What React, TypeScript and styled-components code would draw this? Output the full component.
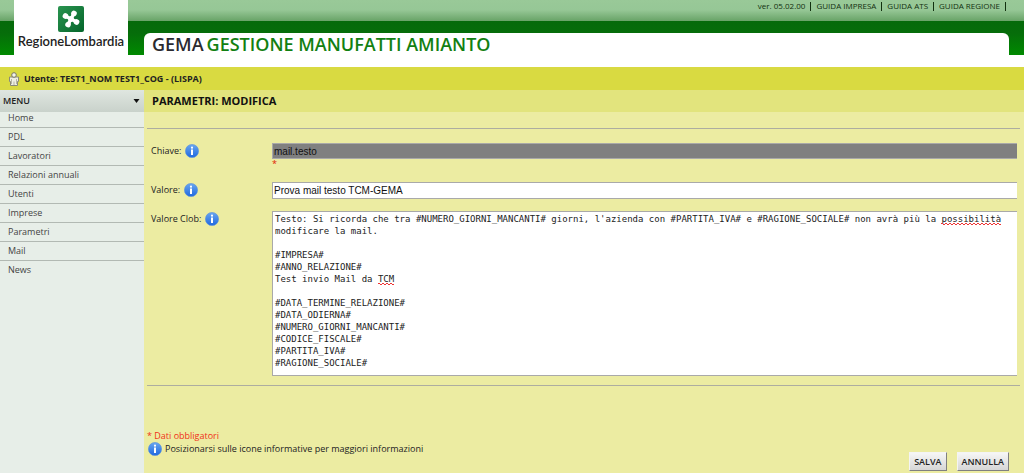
import React from 'react';
import styled, { createGlobalStyle } from 'styled-components';

const GlobalStyle = createGlobalStyle`
  *, *::before, *::after { box-sizing: border-box; }
  html, body, #root { min-height: 100vh; }
  body {
    margin: 0;
    background: #ececa2;
    color: #222;
    font: 9px/12px "Trebuchet MS", "Open Sans", sans-serif;
  }
`;

const Page = styled.div`
  min-height: 100vh;
  display: flex;
  flex-direction: column;
`;

const Header = styled.header`
  display: grid;
  grid-template-columns: 144px 1fr;
  grid-template-rows: 21px 12px 22px 12px;
  background:
    linear-gradient(#99c998 0, #96c796 10px, #68a367 21px, transparent 21px) top / 100% 21px no-repeat,
    linear-gradient(#056a0a, #066d0a 12px, #008a00) 0 21px / 100% 34px no-repeat,
    #fff;
`;

const Logo = styled.a`
  grid-row: 1 / 4;
  grid-column: 1;
  width: 114px;
  margin-left: 14px;
  padding-top: 6px;
  background: #fff;
  color: #222;
  display: flex;
  flex-direction: column;
  align-items: center;
  gap: 2px;
  text-decoration: none;
  font: 600 13px/14px Lato, sans-serif;
`;

const TopNav = styled.nav`
  grid-row: 1;
  grid-column: 2;
  display: flex;
  justify-content: flex-end;
  padding-right: 18px;
`;

const TopItem = styled.span`
  height: 12px;
  display: flex;
  align-items: center;
  font-size: 8px;
  color: #12300f;

  &::after {
    content: '';
    height: 9px;
    margin: 0 5px;
    border-left: 1px solid #12300f;
  }
  &:last-child::after { margin-right: 0; }

  a { color: inherit; text-decoration: none; }
`;

const AppTitle = styled.h1`
  grid-row: 3 / 5;
  grid-column: 2;
  margin: 0 15px 0 0;
  padding-left: 8px;
  border-radius: 6px 6px 0 0;
  background: #fff;
  color: #128012;
  font: 600 18px/22px "Trebuchet MS", "Open Sans", sans-serif;

  span { color: #2a2a30; margin-right: 3px; }
`;

const UserBar = styled.div`
  height: 23px;
  padding-left: 8px;
  display: flex;
  align-items: center;
  gap: 4px;
  background: #d9da41;
  font-weight: 700;
`;

const Body = styled.div`
  flex: 1;
  display: grid;
  grid-template-columns: 144px 1fr;
`;

const Sidebar = styled.nav`
  background: #e7eee8;
`;

const MenuHeader = styled.button`
  width: 100%;
  height: 22px;
  padding: 0 4px 0 3px;
  border: 0;
  display: flex;
  align-items: center;
  justify-content: space-between;
  background: linear-gradient(#dfe6e0, #c9d2cb);
  color: #222;
  font: inherit;
  font-weight: 600;
`;

const MenuList = styled.ul`
  margin: 0;
  padding: 0;
  list-style: none;
`;

const MenuItem = styled.li`
  height: 19px;
  padding: 3px 0 0 8px;
  border-bottom: 1px solid #b2b9b3;

  &:first-child { height: 16px; padding-top: 0; }
  &:last-child { border-bottom: 0; }

  a { color: #444; text-decoration: none; }
`;

const Main = styled.main`
  min-width: 0;
  display: flex;
  flex-direction: column;
`;

const PageTitle = styled.h2`
  margin: 0;
  padding-left: 8px;
  background: #e2e47d;
  color: #111;
  font: 700 11px/22px "Trebuchet MS", "Open Sans", sans-serif;
`;

const Form = styled.form`
  flex: 1;
  display: flex;
  flex-direction: column;
  padding: 16px 4px 2px 3px;
`;

const Fields = styled.div`
  display: grid;
  gap: 12px;
  margin: 0;
  padding: 14px 0 9px;
  border: solid #adada0;
  border-width: 1px 0;
`;

const Field = styled.div`
  display: grid;
  grid-template-columns: 120px 1fr;
  padding: 0 3px 0 4px;
  overflow: hidden;
`;

const Caption = styled.div`
  display: flex;
  align-items: center;
  gap: 4px;
  height: 16px;
`;

const Control = styled.div`
  position: relative;
  min-width: 0;
  overflow: hidden;
  margin-left: 1px;
`;

const TextInput = styled.input`
  display: block;
  width: 100%;
  height: ${(p) => (p.readOnly ? 16 : 17)}px;
  padding: 0 1px;
  border: 1px solid #a9a9a9;
  border-right: 0;
  border-radius: 0;
  background: ${(p) => (p.readOnly ? '#808080' : '#fff')};
  color: #111;
  outline: 0;
  font: 10px/14px "Liberation Sans", Arial, sans-serif;
`;

const Required = styled.span`
  display: block;
  height: 11px;
  line-height: 10px;
  color: #e02000;
`;

const TextArea = styled.textarea`
  display: block;
  width: 100%;
  height: 165px;
  padding: 1px 2px;
  border: 1px solid #a9a9a9;
  border-right: 0;
  border-radius: 0;
  background: #fff;
  color: #222;
  outline: 0;
  resize: none;
  overflow: hidden;
  white-space: pre;
  font: 9px/12px "DejaVu Sans Mono", monospace;
`;

const SpellingMark = styled.span<{ $line: number; $from: number; $length: number }>`
  position: absolute;
  top: ${(p) => p.$line * 12 + 12}px;
  left: calc(3px + ${(p) => p.$from}ch);
  width: ${(p) => p.$length}ch;
  height: 2px;
  pointer-events: none;
  font: 9px/12px "DejaVu Sans Mono", monospace;
  background:
    repeating-linear-gradient(90deg, #e33 0 2px, transparent 2px 4px) 0 0 / 100% 1px no-repeat,
    repeating-linear-gradient(90deg, transparent 0 2px, #e33 2px 4px) 0 1px / 100% 1px no-repeat;
`;

const Footer = styled.div`
  flex: 1;
  display: flex;
  justify-content: space-between;
  padding-top: 44px;
`;

const Note = styled.p<{ $required?: boolean }>`
  display: flex;
  align-items: center;
  gap: 3px;
  margin: 0;
  padding-left: ${(p) => (p.$required ? 0 : 1)}px;
  color: ${(p) => (p.$required ? '#f03018' : '#222')};
`;

const Actions = styled.div`
  align-self: flex-end;
  padding-right: 11px;
  display: flex;
  gap: 10px;
`;

const Button = styled.button`
  height: 19px;
  padding: 0 4px;
  border: 1px solid;
  border-color: #f4f4f4 #808080 #808080 #f4f4f4;
  background: linear-gradient(#f6f6f6, #d6d6d6);
  color: #222;
  font: inherit;
  font-weight: 600;
`;

const RoseLogo = () => (
  <svg width="26" height="26" viewBox="0 0 26 26" aria-hidden="true">
    <defs>
      <linearGradient id="rose" x1="0" y1="0" x2="1" y2="1">
        <stop offset="0" stopColor="#2a9450" />
        <stop offset="1" stopColor="#04652a" />
      </linearGradient>
    </defs>
    <rect width="26" height="26" rx="2" fill="url(#rose)" />
    <g transform="rotate(28 13 13)">
      <path d="M13 6.500V19.500M6.500 13H19.500" stroke="#fff" strokeWidth="3.400" />
      <circle cx="13" cy="13" r="2.800" fill="#fff" />
      <circle cx="13" cy="6.700" r="2.800" fill="#fff" />
      <circle cx="19.300" cy="13" r="2.800" fill="#fff" />
      <circle cx="13" cy="19.300" r="2.800" fill="#fff" />
      <circle cx="6.700" cy="13" r="2.800" fill="#fff" />
    </g>
  </svg>
);

const UserIcon = () => (
  <svg width="12" height="14" viewBox="0 0 12 14" aria-hidden="true">
    <path d="M1.500 5H10.500V9.500H9.500V13.500H2.500V9.500H1.500Z" fill="#efefe2" stroke="#8b8b78" />
    <circle cx="6" cy="3" r="2.300" fill="#f4f4ea" stroke="#77776a" />
    <path d="M3.500 7V12M8.500 7V12M6 9.500V13" stroke="#b5b5a6" />
  </svg>
);

const InfoIcon = () => (
  <svg width="14" height="14" viewBox="0 0 14 14" role="img" aria-label="Informazioni">
    <defs>
      <linearGradient id="info" x1="0" y1="0" x2="0" y2="1">
        <stop offset="0" stopColor="#6aa7ee" />
        <stop offset="1" stopColor="#1f68e0" />
      </linearGradient>
    </defs>
    <circle cx="7" cy="7" r="6.600" fill="url(#info)" stroke="#5a92dc" strokeWidth=".6" />
    <circle cx="7" cy="3.700" r="1.100" fill="#fff" />
    <path d="M7 5.500V11" stroke="#fff" strokeWidth="2" fill="none" />
  </svg>
);

const Caret = () => (
  <svg width="7" height="4" viewBox="0 0 7 4" aria-hidden="true">
    <path d="M0.500 0h6L3.500 4Z" fill="#111" />
  </svg>
);

const menu = ['Home', 'PDL', 'Lavoratori', 'Relazioni annuali', 'Utenti', 'Imprese', 'Parametri', 'Mail', 'News'];
const guides = ['GUIDA IMPRESA', 'GUIDA ATS', 'GUIDA REGIONE'];

const clob = `Testo: Si ricorda che tra #NUMERO_GIORNI_MANCANTI# giorni, l'azienda con #PARTITA_IVA# e #RAGIONE_SOCIALE# non avrà più la possibilità
modificare la mail.

#IMPRESA#
#ANNO_RELAZIONE#
Test invio Mail da TCM

#DATA_TERMINE_RELAZIONE#
#DATA_ODIERNA#
#NUMERO_GIORNI_MANCANTI#
#CODICE_FISCALE#
#PARTITA_IVA#
#RAGIONE_SOCIALE#`;

const clobLines = clob.split('\n');
const misspelled = ['possibilità', 'TCM'].map((word) => {
  const line = clobLines.findIndex((l) => l.includes(word));
  return { word, line, from: clobLines[line].indexOf(word) };
});

export default function App() {
  return (
    <Page>
      <GlobalStyle />
      <Header>
        <Logo href="#">
          <RoseLogo />
          RegioneLombardia
        </Logo>
        <TopNav>
          <TopItem>ver. 05.02.00</TopItem>
          {guides.map((g) => (
            <TopItem key={g}>
              <a href="#">{g}</a>
            </TopItem>
          ))}
        </TopNav>
        <AppTitle>
          <span>GEMA</span>GESTIONE MANUFATTI AMIANTO
        </AppTitle>
      </Header>
      <UserBar>
        <UserIcon />
        Utente: TEST1_NOM TEST1_COG - (LISPA)
      </UserBar>
      <Body>
        <Sidebar>
          <MenuHeader type="button">
            MENU
            <Caret />
          </MenuHeader>
          <MenuList>
            {menu.map((m) => (
              <MenuItem key={m}>
                <a href="#">{m}</a>
              </MenuItem>
            ))}
          </MenuList>
        </Sidebar>
        <Main>
          <PageTitle>PARAMETRI: MODIFICA</PageTitle>
          <Form onSubmit={(e) => e.preventDefault()}>
            <Fields>
              <Field>
                <Caption>
                  <label htmlFor="chiave">Chiave:</label>
                  <InfoIcon />
                </Caption>
                <Control>
                  <TextInput id="chiave" readOnly defaultValue="mail.testo" />
                  <Required>*</Required>
                </Control>
              </Field>
              <Field>
                <Caption>
                  <label htmlFor="valore">Valore:</label>
                  <InfoIcon />
                </Caption>
                <Control>
                  <TextInput id="valore" defaultValue="Prova mail testo TCM-GEMA" />
                </Control>
              </Field>
              <Field>
                <Caption>
                  <label htmlFor="clob">Valore Clob:</label>
                  <InfoIcon />
                </Caption>
                <Control>
                  <TextArea id="clob" spellCheck={false} defaultValue={clob} />
                  {misspelled.map((m) => (
                    <SpellingMark key={m.word} $line={m.line} $from={m.from} $length={m.word.length} />
                  ))}
                </Control>
              </Field>
            </Fields>
            <Footer>
              <div>
                <Note $required>* Dati obbligatori</Note>
                <Note>
                  <InfoIcon />
                  Posizionarsi sulle icone informative per maggiori informazioni
                </Note>
              </div>
              <Actions>
                <Button type="submit">SALVA</Button>
                <Button type="button">ANNULLA</Button>
              </Actions>
            </Footer>
          </Form>
        </Main>
      </Body>
    </Page>
  );
}
